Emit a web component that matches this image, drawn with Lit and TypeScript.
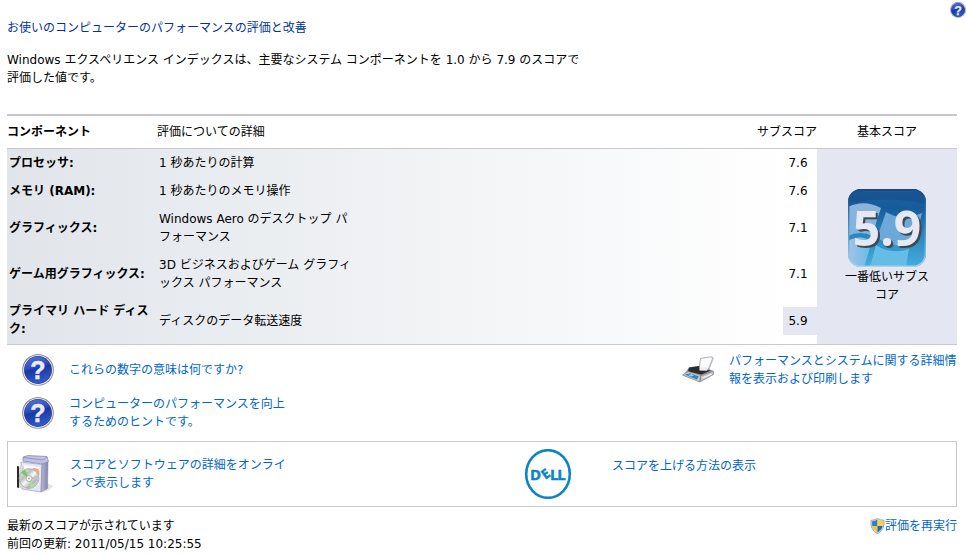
import { LitElement, html, css, svg, nothing } from "lit";
import { customElement } from "lit/decorators.js";

interface Component {
  name: string;
  detail: string;
  score: string;
}

const COMPONENTS: Component[] = [
  { name: "プロセッサ:", detail: "1 秒あたりの計算", score: "7.6" },
  { name: "メモリ (RAM):", detail: "1 秒あたりのメモリ操作", score: "7.6" },
  { name: "グラフィックス:", detail: "Windows Aero のデスクトップ パフォーマンス", score: "7.1" },
  { name: "ゲーム用グラフィックス:", detail: "3D ビジネスおよびゲーム グラフィックス パフォーマンス", score: "7.1" },
  { name: "プライマリ ハード ディスク:", detail: "ディスクのデータ転送速度", score: "5.9" },
];

const BASE_SCORE = "5.9";

@customElement("help-icon")
export class HelpIcon extends LitElement {
  static styles = css`
    :host { display: block; }
    svg { display: block; width: 100%; height: 100%; }
    .mark { font: bold 25px "Liberation Sans", sans-serif; fill: #e9ebf2; stroke: #e9ebf2; stroke-width: 0.5; }
  `;
  render() {
    return html`<svg viewBox="0 0 32 32" aria-hidden="true">
      <defs>
        <linearGradient id="rim" x1="0" y1="0" x2="0" y2="1">
          <stop offset="0" stop-color="#6f6f72"></stop>
          <stop offset="1" stop-color="#9a9a9e"></stop>
        </linearGradient>
        <linearGradient id="ball" x1="0" y1="0" x2="0.3" y2="1">
          <stop offset="0" stop-color="#5a78d6"></stop>
          <stop offset="0.45" stop-color="#2c4cc0"></stop>
          <stop offset="0.55" stop-color="#1b37a4"></stop>
          <stop offset="1" stop-color="#3157c8"></stop>
        </linearGradient>
      </defs>
      <circle cx="16" cy="16" r="15.8" fill="url(#rim)"></circle>
      <circle cx="16" cy="16" r="14.9" fill="#e8e8ea"></circle>
      <circle cx="16" cy="16" r="13.9" fill="#26388a"></circle>
      <circle cx="16" cy="16" r="13.4" fill="url(#ball)"></circle>
      <text class="mark" x="16" y="25" text-anchor="middle">?</text>
    </svg>`;
  }
}

const printerIcon = svg`<svg class="printer" viewBox="0 0 32 28" aria-hidden="true">
  <path d="M18.5 2.4 L29 0.8 L31 1.6 L26 14 L17 14 Z" fill="#fbfbfd" stroke="#8b8d92" stroke-width="0.7"/>
  <path d="M29.5 1 Q32 1.5 30.6 4.5 L27 13" fill="none" stroke="#b9bbc0" stroke-width="0.9"/>
  <path d="M7 11.5 L17 10 L18 13 L26 12.5 L31.4 15 L31.4 18.5 L18 26 L0.8 19.5 Z" fill="#97999e"/>
  <path d="M7 11.5 L17 10 L18 13.5 L29 14.5 L19.5 18.5 L6 15.5 Z" fill="#2a2b2e"/>
  <path d="M17.6 11 L26 11.5 L25 14.8 L17.5 14.6 Z" fill="#eeeef2"/>
  <path d="M18.5 20 L31.4 15 L31.4 18.5 L18.6 25.6 Z" fill="#c2c4c8" stroke="#6b6c70" stroke-width="0.5"/>
  <path d="M20.5 22 L29.8 18" stroke="#f8f8fa" stroke-width="1.2"/>
  <path d="M0.5 19 L6.5 15.6 L18.6 19.4 L17.5 26 Z" fill="#c9cbd0" stroke="#717277" stroke-width="0.5"/>
  <path d="M3 18.8 L8 17.2 L16.8 20.4 L15 23.6 Z" fill="#2f82c6"/>
  <path d="M6 19 L9.5 18 L12 19.4 L9 20.4 Z" fill="#8fd0f2"/>
  <path d="M11 21 L14.5 20.4 L14 22.4 Z" fill="#3b9a5a"/>
</svg>`;

const softwareIcon = svg`<svg class="software" viewBox="0 0 38 40" aria-hidden="true">
  <defs>
    <linearGradient id="side" x1="0" y1="0" x2="1" y2="0">
      <stop offset="0" stop-color="#b9b9d8"/><stop offset="1" stop-color="#8584ab"/>
    </linearGradient>
    <linearGradient id="disc" x1="0" y1="0" x2="1" y2="1">
      <stop offset="0" stop-color="#eef3ee"/><stop offset="0.35" stop-color="#b9c0bc"/>
      <stop offset="0.5" stop-color="#fafafa"/><stop offset="0.7" stop-color="#b4b8b6"/><stop offset="1" stop-color="#e7ebe8"/>
    </linearGradient>
  </defs>
  <path d="M31 29 L37 32 L32 37 L27 38 Z" fill="#e3e3e6"/>
  <path d="M7 3 L12 1.5 L31 2.5 L32.5 7.5 L26 10 L7 7 Z" fill="#c2c2e2" stroke="#7f7fae" stroke-width="0.7"/>
  <path d="M8 3.5 L27 6 L31 2.8" fill="none" stroke="#8080b2" stroke-width="0.7"/>
  <path d="M5 8 L26 10.5 L25 38 L6 35 Z" fill="#e5e5f6" stroke="#9999c2" stroke-width="0.7"/>
  <path d="M26 10.5 L32 8 L31.5 34.5 L25 38 Z" fill="url(#side)" stroke="#8080a6" stroke-width="0.5"/>
  <path d="M7.5 11 L23.5 13 L23 31 L8 30 Z" fill="#fafafc"/>
  <path d="M17 14 Q24 13 23.4 20 Q21 26 17 22 Z" fill="#e9b469"/>
  <path d="M1 12 L3.2 12.5 L3.2 34 L1 33.5 Z" fill="#2a2a2d"/>
  <path d="M3.2 13 L8 12 L8 33 L3.2 34 Z" fill="#d5d8d5"/>
  <circle cx="13" cy="24.5" r="9.9" fill="url(#disc)" stroke="#969e99" stroke-width="0.6"/>
  <path d="M13 24.5 L5 18.8 A9.9 9.9 0 0 1 9 15.6 Z" fill="#7ec66e"/>
  <path d="M13 24.5 L19 32.2 A9.9 9.9 0 0 1 15 34.1 Z" fill="#a9dba2"/>
  <path d="M13 24.5 L22 21 A9.9 9.9 0 0 1 22.8 26 Z" fill="#c0c5c1"/>
  <circle cx="13" cy="24.5" r="3" fill="#f4f5f4" stroke="#858c87" stroke-width="0.6"/>
  <circle cx="13" cy="24.5" r="1.1" fill="#b9beb9"/>
</svg>`;

const dellLogo = svg`<svg class="dell" viewBox="0 0 48 50" role="img" aria-label="Dell">
  <ellipse cx="24" cy="25" rx="21.8" ry="23.8" fill="#fff" stroke="#0d85c3" stroke-width="2.6"/>
  <text class="dell-text" x="6" y="30.5">D</text>
  <text class="dell-text dell-e" transform="rotate(-36 21.5 25)" x="18" y="29.6">E</text>
  <text class="dell-text" x="26" y="30.5">L</text>
  <text class="dell-text" x="33.3" y="30.5">L</text>
</svg>`;

const shieldIcon = svg`<svg class="shield" viewBox="0 0 15 16" aria-hidden="true">
  <defs><clipPath id="shape"><path d="M7.5 1.6 Q10 3.4 13 3.2 Q13.6 11 7.5 14.4 Q1.4 11 2 3.2 Q5 3.4 7.5 1.6 Z"/></clipPath></defs>
  <path d="M7.5 0.4 Q10.5 2.4 14 2.2 Q15 12 7.5 15.7 Q0 12 1 2.2 Q4.5 2.4 7.5 0.4 Z" fill="#d4dae2" stroke="#7f8c9c" stroke-width="0.7"/>
  <g clip-path="url(#shape)">
    <rect x="0" y="0" width="7.5" height="8" fill="#2f7dd6"/>
    <rect x="7.5" y="0" width="7.5" height="8" fill="#fbd33c"/>
    <rect x="0" y="8" width="7.5" height="8" fill="#f9c81e"/>
    <rect x="7.5" y="8" width="7.5" height="8" fill="#2467c4"/>
  </g>
</svg>`;

const scoreTile = svg`<svg class="tile" viewBox="0 0 78 78" role="img" aria-label="${BASE_SCORE}">
  <defs>
    <linearGradient id="sky" x1="0" y1="0" x2="0" y2="1">
      <stop offset="0" stop-color="#1c62a0"/><stop offset="0.25" stop-color="#165c9b"/>
      <stop offset="0.6" stop-color="#2b86bf"/><stop offset="1" stop-color="#46aedc"/>
    </linearGradient>
    <linearGradient id="edge" x1="0" y1="0" x2="0" y2="1">
      <stop offset="0" stop-color="#17497d"/><stop offset="0.5" stop-color="#4d93c8"/><stop offset="1" stop-color="#a9d3ec"/>
    </linearGradient>
    <linearGradient id="pane" x1="0" y1="0" x2="0" y2="1">
      <stop offset="0" stop-color="#8db4da"/><stop offset="1" stop-color="#7cb5de"/>
    </linearGradient>
    <linearGradient id="low" x1="0" y1="0" x2="1" y2="0">
      <stop offset="0" stop-color="#a5c3e4"/><stop offset="1" stop-color="#62bde6"/>
    </linearGradient>
    <clipPath id="card"><rect x="0" y="0" width="78" height="78" rx="13"/></clipPath>
  </defs>
  <g clip-path="url(#card)">
    <rect width="78" height="78" fill="url(#sky)"/>
    <path d="M0 18 Q16 10 33 19 Q28 32 25 47 Q12 41 0 47 Z" fill="url(#pane)"/>
    <path d="M38 23 Q54 33 74 24 L66 54 Q48 61 29 49 Z" fill="#6ba9d8"/>
    <path d="M0 52 Q11 45 24 52 L16 78 L0 78 Z" fill="url(#low)"/>
    <path d="M28 56 Q43 66 61 60 L58 78 L22 78 Z" fill="#65bce6"/>
    <path d="M0 0 H78 V15 Q39 6 0 15 Z" fill="#174f8b" opacity="0.65"/>
  </g>
  <rect x="0.7" y="0.7" width="76.6" height="76.6" rx="12.5" fill="none" stroke="url(#edge)" stroke-width="1.4"/>
  <text class="tile-text" x="39" y="57" text-anchor="middle">${BASE_SCORE}</text>
</svg>`;

@customElement("app-root")
export class AppRoot extends LitElement {
  static styles = css`
    :host {
      display: block;
      min-height: 100vh;
      background: #fff;
      color: #000;
      font-family: "DejaVu Sans", "Noto Sans CJK JP", sans-serif;
      font-size: 12px;
      line-height: 18px;
    }
    a { color: #0066cc; text-decoration: none; }
    a:hover { text-decoration: underline; }
    svg { display: block; flex: none; }
    h1, p { margin: 0; font-size: 12px; font-weight: normal; }
    .toolbar { display: flex; justify-content: flex-end; padding: 2px 1px 0; }
    .help { width: 16px; height: 16px; padding: 0; border: 0; background: none; cursor: pointer; }
    .page { padding: 1px 10px 0 7px; }
    .title { color: #003399; }
    .intro { max-width: 580px; margin-top: 14px; }

    .scores { width: 100%; margin-top: 27px; border-collapse: separate; border-spacing: 0; border-top: 2px solid #c8c8cb; table-layout: fixed; }
    .col-name { width: 150px; }
    .col-score { width: 60px; }
    .col-base { width: 140px; }
    th, td { padding: 0; text-align: left; }
    thead th { height: 32px; font-weight: normal; border-bottom: 1px solid #c8c8cb; }
    thead .strong { font-weight: bold; }
    thead .right { text-align: right; }
    thead .center { text-align: center; }
    tbody { background: linear-gradient(to right, #e1e5ea, #fff 82%); }
    tbody th, tbody td { padding: 5px 0 5px 2px; }
    tbody tr:last-child > *, tbody .base { border-bottom: 1px solid #c8c8cb; }
    tbody tr:last-child th { padding-bottom: 6px; }
    .detail { max-width: 194px; line-break: loose; }
    tbody .score { padding: 0; }
    .value { width: 34px; margin-left: auto; line-height: 28px; text-align: center; padding-right: 4px; box-sizing: border-box; }
    .lowest { background: #e4e6f2; }
    tbody .base { padding: 0; background: #e4e6f2; }
    .base-box { display: flex; flex-direction: column; align-items: center; gap: 1px; text-align: center; }
    .base-label { width: 90px; }
    .tile { width: 78px; height: 78px; }
    .tile-text { font: bold 48px "Open Sans", "Noto Sans", sans-serif; fill: #e6e8f4; filter: drop-shadow(2px 2px 0 #404850); }

    .links { display: flex; justify-content: space-between; }
    .left { display: flex; flex-direction: column; gap: 9px; padding: 9px 0 0 15px; }
    .item { display: flex; align-items: center; gap: 15px; }
    .item help-icon { width: 32px; height: 32px; flex: none; }
    .wrap { width: 218px; }
    .right-links { padding-top: 7px; }
    .print-text { width: 228px; }
    .printer { width: 32px; height: 28px; }

    .box { display: grid; grid-template-columns: 1fr 1fr; align-items: center; min-height: 64px; margin-top: 10px; border: 1px solid #c8c8cb; }
    .online { display: flex; align-items: center; gap: 16px; padding-left: 8px; }
    .software { width: 38px; height: 40px; }
    .vendor { display: flex; gap: 40px; padding-left: 42px; }
    .vendor a { padding-top: 8px; }
    .dell { width: 48px; height: 50px; }
    .dell-text { font: bold 15px "Open Sans", sans-serif; fill: #0d85c3; stroke: #0d85c3; stroke-width: 0.5; }
    .dell-e { font-size: 13px; }

    .footer { display: flex; justify-content: space-between; align-items: flex-start; margin-top: 10px; }
    .rerun { display: flex; align-items: center; }
    .shield { width: 15px; height: 16px; }
  `;

  render() {
    return html`
      <div class="toolbar">
        <button class="help" aria-label="ヘルプ"><help-icon></help-icon></button>
      </div>
      <main class="page">
        <h1 class="title">お使いのコンピューターのパフォーマンスの評価と改善</h1>
        <p class="intro">Windows エクスペリエンス インデックスは、主要なシステム コンポーネントを 1.0 から 7.9 のスコアで<br>評価した値です。</p>

        <table class="scores">
          <colgroup>
            <col class="col-name"><col><col class="col-score"><col class="col-base">
          </colgroup>
          <thead>
            <tr>
              <th class="strong" scope="col">コンポーネント</th>
              <th scope="col">評価についての詳細</th>
              <th class="right" scope="col">サブスコア</th>
              <th class="center" scope="col">基本スコア</th>
            </tr>
          </thead>
          <tbody>
            ${COMPONENTS.map((c, i) => html`
              <tr>
                <th scope="row">${c.name}</th>
                <td><div class="detail">${c.detail}</div></td>
                <td class="score"><div class="value ${c.score === BASE_SCORE ? "lowest" : ""}">${c.score}</div></td>
                ${i === 0
                  ? html`<td class="base" rowspan=${COMPONENTS.length}>
                      <div class="base-box">${scoreTile}<div class="base-label">一番低いサブスコア</div></div>
                    </td>`
                  : nothing}
              </tr>`)}
          </tbody>
        </table>

        <div class="links">
          <div class="left">
            <div class="item"><help-icon></help-icon><a href="#">これらの数字の意味は何ですか?</a></div>
            <div class="item"><help-icon></help-icon><a class="wrap" href="#">コンピューターのパフォーマンスを向上するためのヒントです。</a></div>
          </div>
          <div class="right-links">
            <div class="item">${printerIcon}<a class="print-text" href="#">パフォーマンスとシステムに関する詳細情報を表示および印刷します</a></div>
          </div>
        </div>

        <div class="box">
          <div class="online">${softwareIcon}<a class="wrap" href="#">スコアとソフトウェアの詳細をオンラインで表示します</a></div>
          <div class="vendor">${dellLogo}<a href="#">スコアを上げる方法の表示</a></div>
        </div>

        <div class="footer">
          <div>
            <p>最新のスコアが示されています</p>
            <p>前回の更新: 2011/05/15 10:25:55</p>
          </div>
          <a class="rerun" href="#">${shieldIcon}評価を再実行</a>
        </div>
      </main>
    `;
  }
}
